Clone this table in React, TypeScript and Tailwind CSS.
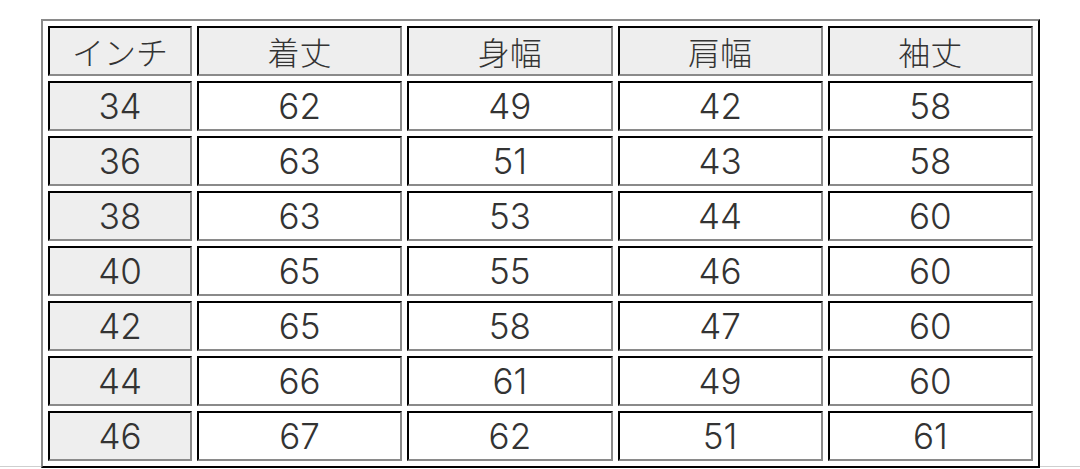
import React from 'react';

const headers = ['インチ', '着丈', '身幅', '肩幅', '袖丈'];

const rows: number[][] = [
  [34, 62, 49, 42, 58],
  [36, 63, 51, 43, 58],
  [38, 63, 53, 44, 60],
  [40, 65, 55, 46, 60],
  [42, 65, 58, 47, 60],
  [44, 66, 61, 49, 60],
  [46, 67, 62, 51, 61],
];

const cell =
  'h-[50px] p-0 text-center align-middle border-2 border-t-black border-l-black border-r-[#8a8a8a] border-b-[#8a8a8a] leading-none';

export default function App() {
  return (
    <div className="relative w-[1080px] h-[469px] bg-white overflow-hidden text-[#333]">
      {/* page divider under the table */}
      <div className="absolute left-0 right-0 top-[466px] h-px bg-[#cfcfcf]" />

      <div className="pt-[19px] pl-[41px]">
        <table className="relative w-[999px] table-fixed border-separate border-spacing-[5px] bg-white border-2 border-t-[#8a8a8a] border-l-[#8a8a8a] border-r-black border-b-black">
          <colgroup>
            <col className="w-[144px]" />
            <col />
            <col />
            <col />
            <col />
          </colgroup>
          <thead>
            <tr>
              {headers.map(h => (
                <th
                  key={h}
                  className={`${cell} bg-[#eeeeee] font-light text-[32px] font-['Noto_Sans_CJK_JP',sans-serif]`}
                >
                  {h}
                </th>
              ))}
            </tr>
          </thead>
          <tbody>
            {rows.map(r => (
              <tr key={r[0]}>
                {r.map((v, i) => (
                  <td
                    key={i}
                    className={`${cell} ${i === 0 ? 'bg-[#eeeeee]' : 'bg-white'} font-light text-[35px] font-['Inter','Liberation_Sans',sans-serif]`}
                  >
                    {v}
                  </td>
                ))}
              </tr>
            ))}
          </tbody>
        </table>
      </div>
    </div>
  );
}
